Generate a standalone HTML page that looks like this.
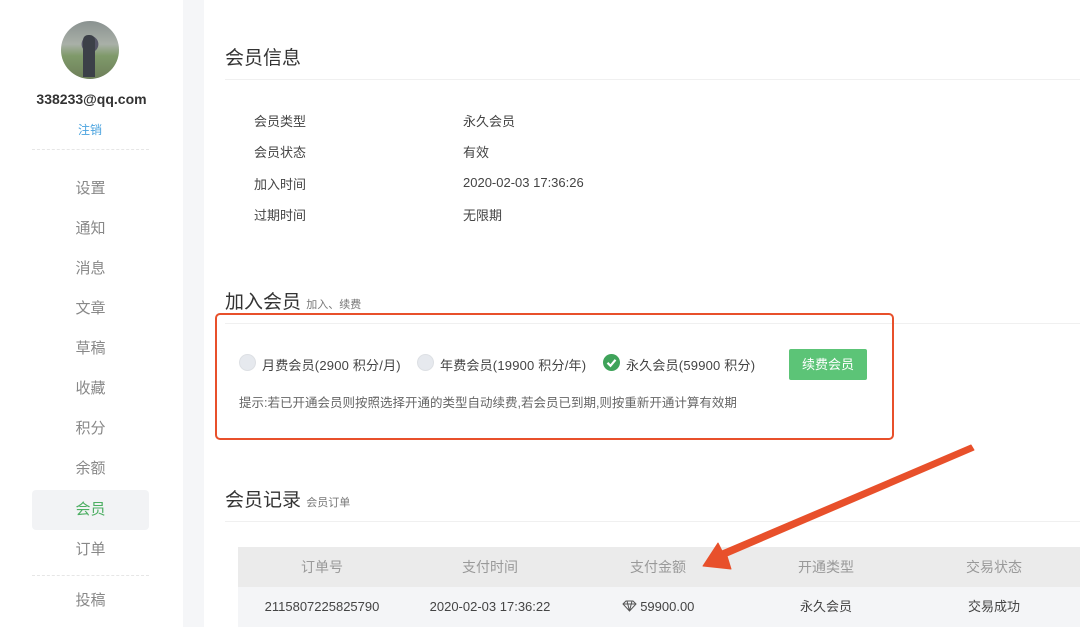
<!DOCTYPE html>
<html><head><meta charset="utf-8"><style>
*{margin:0;padding:0;box-sizing:border-box}
body{width:1080px;height:627px;overflow:hidden;background:#fff;font-family:"Liberation Sans","Noto Sans CJK SC",sans-serif;position:relative;color:#333}
.a{position:absolute;white-space:nowrap}
.menu{position:absolute;left:32px;width:117px;text-align:center;font-size:15px;color:#888;height:40px;line-height:40px}
.line{position:absolute;height:1px;background:#f0f0f0}
.lbl{font-size:13px;color:#444}
.th{position:absolute;top:547px;height:40px;line-height:40px;width:168px;text-align:center;font-size:14px;color:#999}
.td{position:absolute;top:587px;height:40px;line-height:40px;width:168px;text-align:center;font-size:13px;color:#444}
.radio{position:absolute;width:17px;height:17px;border-radius:50%;background:#e6e9ee;border:1px solid #dde0e4}
</style></head><body>
<div class="a" style="left:183px;top:0;width:21px;height:627px;background:#f5f6f8"></div>
<div class="a" style="left:61px;top:21px;width:58px;height:58px;border-radius:50%;background:radial-gradient(circle at 50% 40%,#556 0 18%,transparent 19%),linear-gradient(#8a9290 0,#a9b0a8 40%,#7f9a6a 60%,#6e7f5a 100%)"></div>
<div class="a" style="left:83px;top:35px;width:12px;height:42px;background:#3c4048;border-radius:5px 5px 0 0"></div>
<div class="a" style="left:0;width:183px;top:91px;text-align:center;font-size:14px;font-weight:bold;color:#333">338233@qq.com</div>
<div class="a" style="left:0;width:180px;top:121px;text-align:center;font-size:12px;color:#4aa3df">注销</div>
<div class="a" style="left:32px;top:149px;width:117px;border-top:1px dashed #e6e6e6"></div>
<div class="menu" style="top:169px">设置</div>
<div class="menu" style="top:209px">通知</div>
<div class="menu" style="top:249px">消息</div>
<div class="menu" style="top:289px">文章</div>
<div class="menu" style="top:329px">草稿</div>
<div class="menu" style="top:369px">收藏</div>
<div class="menu" style="top:409px">积分</div>
<div class="menu" style="top:449px">余额</div>
<div class="menu" style="top:490px;background:#f2f3f5;border-radius:4px;color:#4cae62">会员</div>
<div class="menu" style="top:530px">订单</div>
<div class="a" style="left:32px;top:575px;width:117px;border-top:1px dashed #e6e6e6"></div>
<div class="menu" style="top:581px">投稿</div>

<div class="a" style="left:225px;top:43px;font-size:19px;color:#333">会员信息</div>
<div class="line" style="left:225px;top:79px;width:855px"></div>
<div class="a lbl" style="left:254px;top:111px">会员类型</div><div class="a lbl" style="left:463px;top:111px">永久会员</div>
<div class="a lbl" style="left:254px;top:142px">会员状态</div><div class="a lbl" style="left:463px;top:142px">有效</div>
<div class="a lbl" style="left:254px;top:174px">加入时间</div><div class="a lbl" style="left:463px;top:175px">2020-02-03 17:36:26</div>
<div class="a lbl" style="left:254px;top:205px">过期时间</div><div class="a lbl" style="left:463px;top:205px">无限期</div>

<div class="a" style="left:225px;top:287px;font-size:19px;color:#333">加入会员 <span style="font-size:11px;color:#777">加入、续费</span></div>
<div class="line" style="left:225px;top:323px;width:855px"></div>
<div class="a" style="left:215px;top:313px;width:679px;height:127px;border:2px solid #e8502b;border-radius:5px"></div>
<div class="radio" style="left:239px;top:354px"></div>
<div class="a lbl" style="left:262px;top:355px;letter-spacing:0.2px">月费会员(2900 积分/月)</div>
<div class="radio" style="left:417px;top:354px"></div>
<div class="a lbl" style="left:440px;top:355px;letter-spacing:0.2px">年费会员(19900 积分/年)</div>
<div class="a" style="left:603px;top:354px;width:17px;height:17px;border-radius:50%;background:#3fa35a"><svg width="17" height="17"><path d="M4.5 8.8l3 3 5-6" stroke="#fff" stroke-width="2.2" fill="none"/></svg></div>
<div class="a lbl" style="left:626px;top:355px;letter-spacing:0.2px">永久会员(59900 积分)</div>
<div class="a" style="left:789px;top:349px;width:78px;height:31px;background:#5cc477;border-radius:2px;color:#fff;font-size:13px;text-align:center;line-height:31px">续费会员</div>
<div class="a" style="left:239px;top:392px;font-size:12.5px;color:#666">提示:若已开通会员则按照选择开通的类型自动续费,若会员已到期,则按重新开通计算有效期</div>

<div class="a" style="left:225px;top:485px;font-size:19px;color:#333">会员记录 <span style="font-size:11px;color:#777">会员订单</span></div>
<div class="line" style="left:225px;top:521px;width:855px"></div>
<div class="a" style="left:238px;top:547px;width:842px;height:40px;background:#ebebeb"></div>
<div class="a" style="left:238px;top:587px;width:842px;height:40px;background:#f4f5f7"></div>
<div class="th" style="left:238px">订单号</div><div class="th" style="left:406px">支付时间</div><div class="th" style="left:574px">支付金额</div><div class="th" style="left:742px">开通类型</div><div class="th" style="left:910px">交易状态</div>
<div class="td" style="left:238px">2115807225825790</div><div class="td" style="left:406px">2020-02-03 17:36:22</div>
<div class="td" style="left:574px"><svg width="15" height="12" style="vertical-align:-1px"><path d="M1 4l3-3h7l3 3-6.5 7z M1 4h13 M5 1l2.5 10 2.5-10" stroke="#555" stroke-width="1" fill="none"/></svg> 59900.00</div>
<div class="td" style="left:742px">永久会员</div><div class="td" style="left:910px">交易成功</div>

<svg class="a" style="left:0;top:0" width="1080" height="627"><path d="M971 445 L974 450 L727 556 L731 569 L703 566 L718 543 L722 551 Z" fill="#e8502b" stroke="#e8502b" stroke-width="1" stroke-linejoin="round"/></svg>
</body></html>
